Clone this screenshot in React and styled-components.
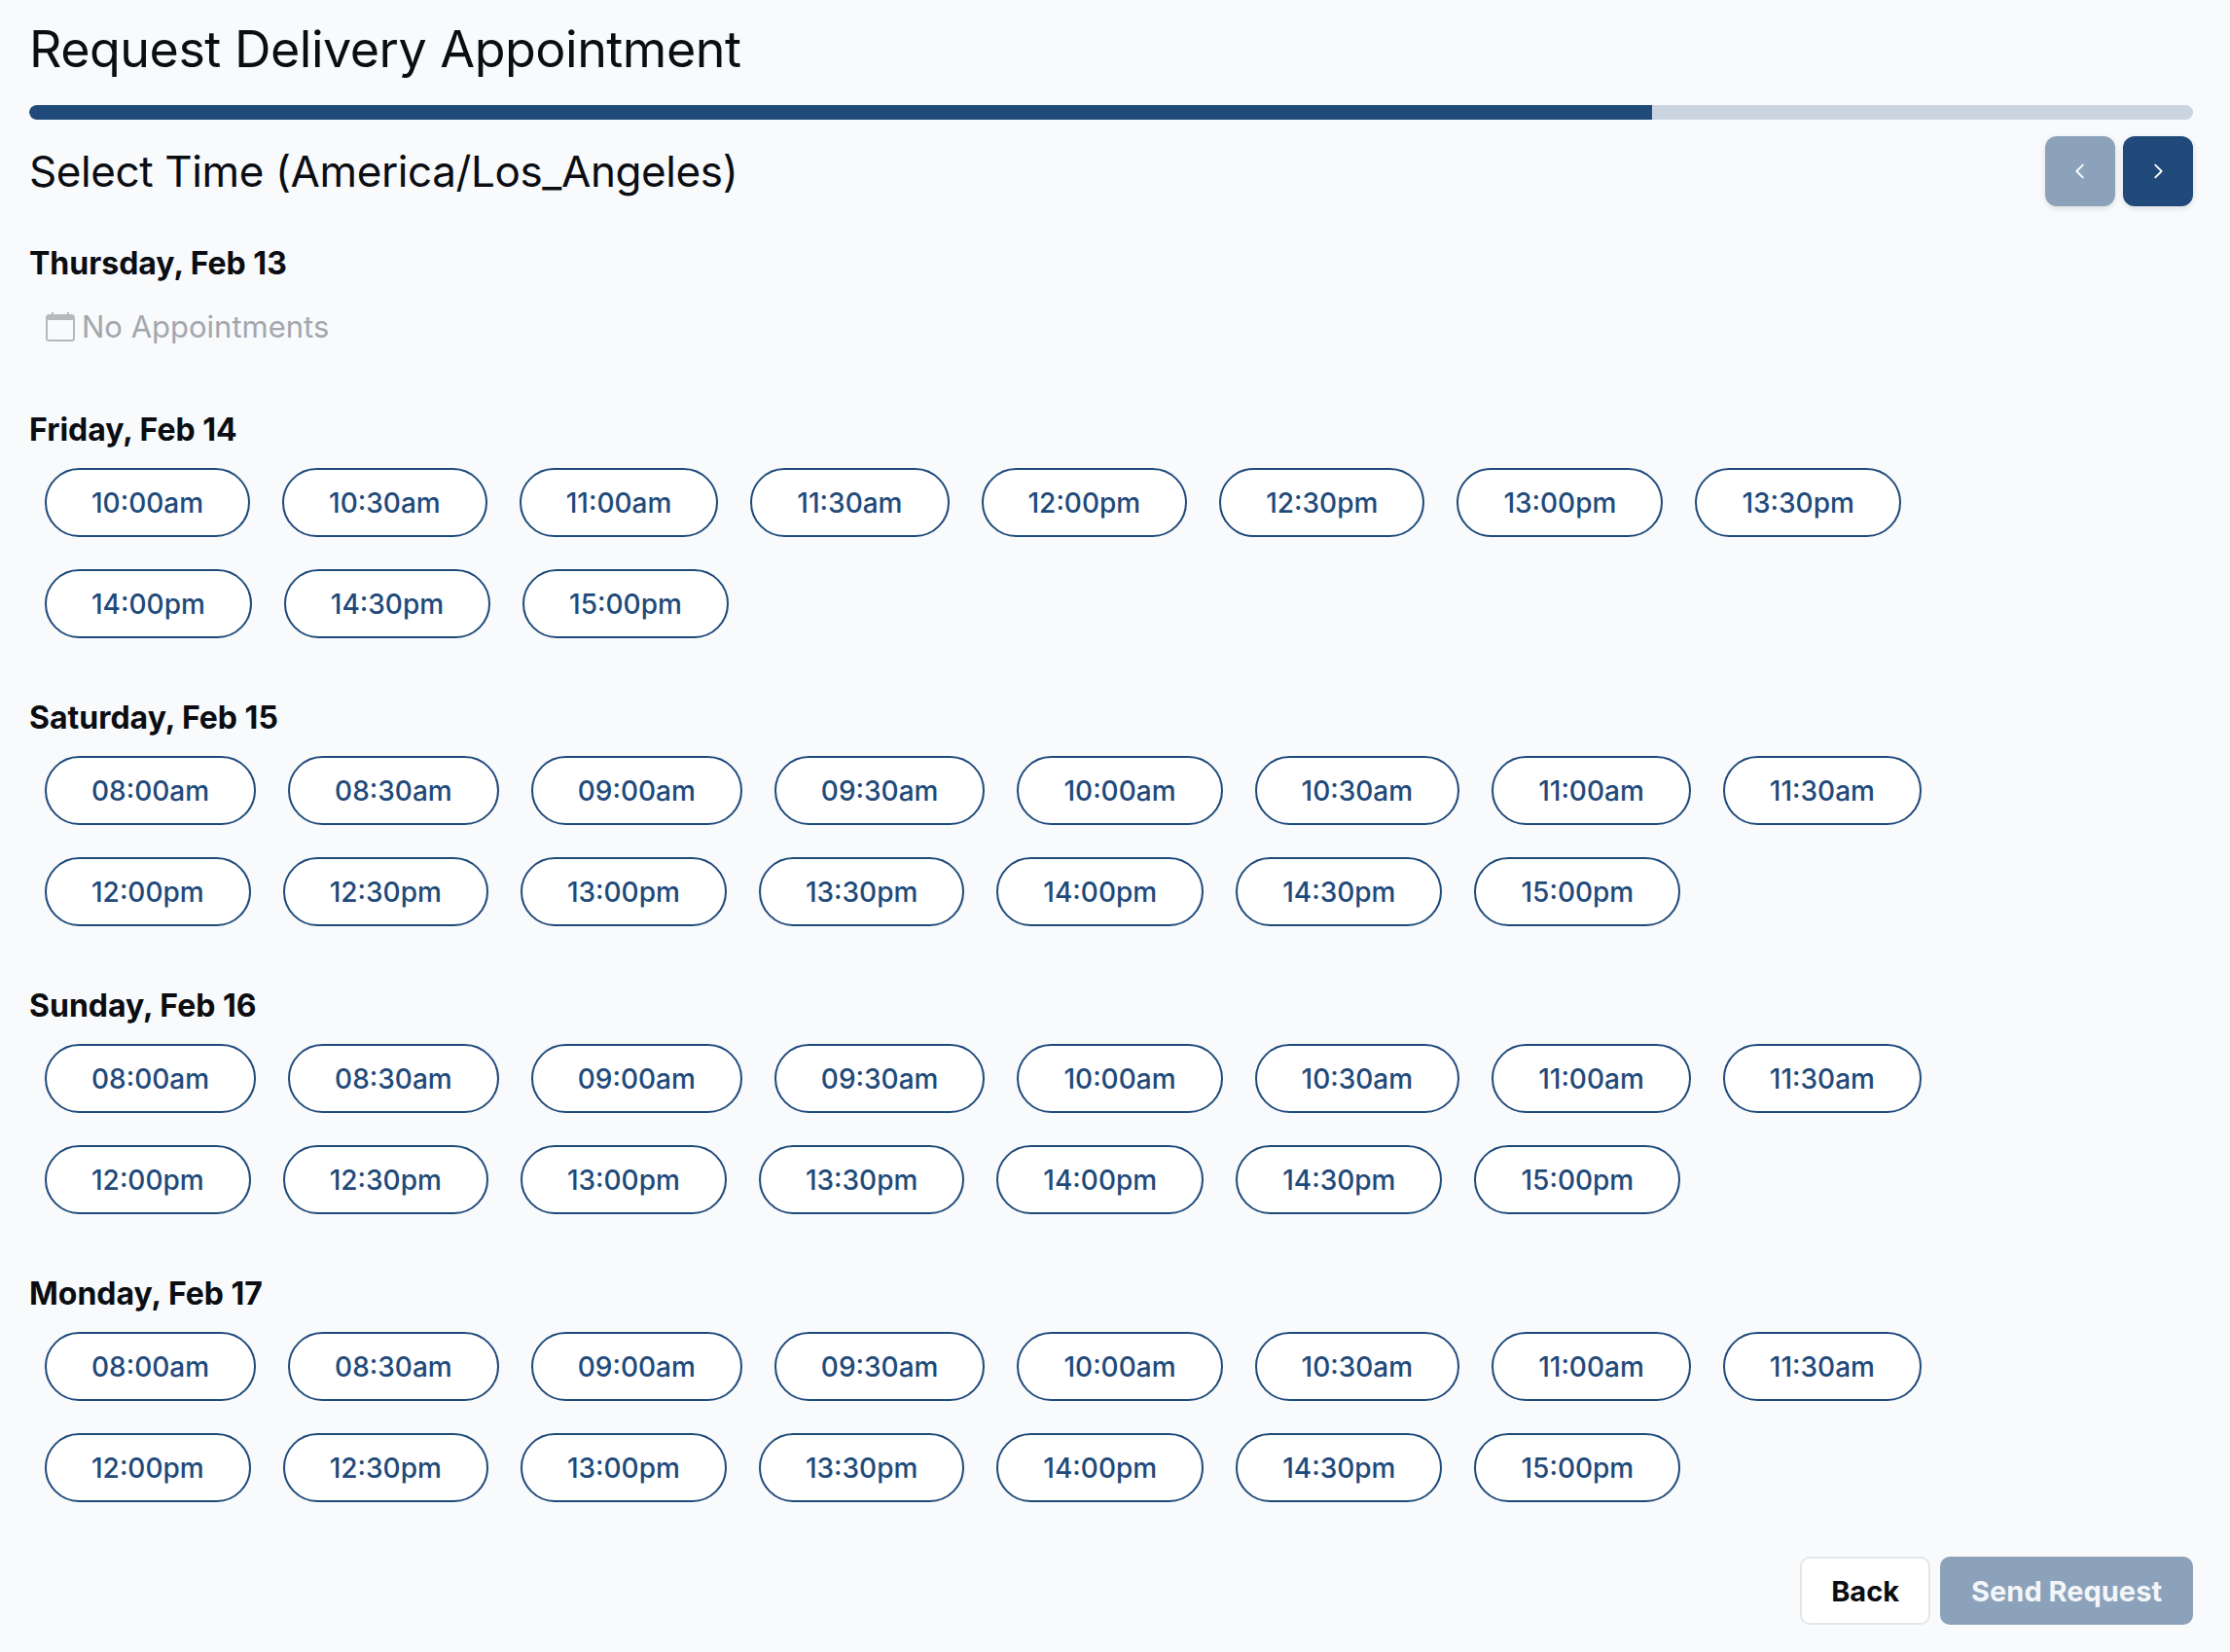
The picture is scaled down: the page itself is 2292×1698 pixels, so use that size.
import React from "react";
import styled, { createGlobalStyle } from "styled-components";

const Global = createGlobalStyle`
  html, body { margin: 0; background: #f8fafc; }
  body { font-family: Inter, "Noto Sans", sans-serif; color: #0b0d12; }
`;

const Page = styled.div`
  padding: 12px 38px 30px 30px;
  display: flex;
  flex-direction: column;
`;
const Title = styled.h1`
  margin: 0;
  font-size: 52px;
  font-weight: 400;
  line-height: 78px;
  letter-spacing: -0.5px;
`;
const Track = styled.div`
  margin-top: 18px;
  height: 15px;
  border-radius: 8px;
  background: #cbd5e1;
  overflow: hidden;
`;
const Fill = styled.div`
  height: 100%;
  background: #1f4a7a;
  border-radius: 8px 0 0 8px;
`;
const HeaderRow = styled.div`
  margin-top: 17px;
  display: flex;
  align-items: center;
  justify-content: space-between;
`;
const Subtitle = styled.h2`
  margin: 0;
  font-size: 44px;
  font-weight: 400;
  letter-spacing: -0.4px;
`;
const NavGroup = styled.div`
  display: flex;
  gap: 8px;
`;
const NavBtn = styled.button`
  width: 72px;
  height: 72px;
  border: none;
  border-radius: 12px;
  background: ${(p) => (p.$disabled ? "#8ca2bb" : "#1f4a7a")};
  color: #fff;
  display: flex;
  align-items: center;
  justify-content: center;
  box-shadow: 0 2px 6px rgba(0,0,0,0.12);
`;
const Days = styled.div`
  margin-top: 39px;
  display: flex;
  flex-direction: column;
  gap: 62px;
`;
const Day = styled.section`
  display: flex;
  flex-direction: column;
`;
const DayTitle = styled.h3`
  margin: 0;
  font-size: 32px;
  font-weight: 700;
  line-height: 40px;
`;
const Empty = styled.div`
  margin: 26px 0 6px 16px;
  display: flex;
  align-items: center;
  gap: 6px;
  color: #a3a7ad;
  font-size: 31px;
`;
const Slots = styled.div`
  margin-top: 19px;
  padding-left: 16px;
  display: flex;
  flex-wrap: wrap;
  column-gap: 33px;
  row-gap: 33px;
  max-width: 2000px;
`;
const Slot = styled.button`
  height: 71px;
  padding: 0 46px;
  border: 2px solid #1f4a7a;
  border-radius: 36px;
  background: #fff;
  color: #1f4a7a;
  font-family: Inter, sans-serif;
  font-size: 28px;
  font-weight: 500;
`;
const Footer = styled.div`
  margin-top: 56px;
  display: flex;
  justify-content: flex-end;
  gap: 10px;
`;
const FootBtn = styled.button`
  height: 70px;
  padding: 0 ${(p) => (p.$primary ? "32px" : "30px")};
  border-radius: 10px;
  font-family: Inter, sans-serif;
  font-size: 29px;
  font-weight: 700;
  border: ${(p) => (p.$primary ? "none" : "2px solid #e4e6ea")};
  background: ${(p) => (p.$primary ? "#8ca2bb" : "#fff")};
  color: ${(p) => (p.$primary ? "#f3f6f9" : "#0b0d12")};
`;

const half = (from, to) => {
  const out = [];
  for (let h = from; h <= to; h++) {
    for (const m of ["00", "30"]) {
      if (h === to && m === "30") continue;
      const hh = String(h).padStart(2, "0");
      out.push(`${hh}:${m}${h >= 12 ? "pm" : "am"}`);
    }
  }
  return out;
};

const days = [
  { name: "Thursday, Feb 13", slots: [] },
  { name: "Friday, Feb 14", slots: half(10, 15) },
  { name: "Saturday, Feb 15", slots: half(8, 15) },
  { name: "Sunday, Feb 16", slots: half(8, 15) },
  { name: "Monday, Feb 17", slots: half(8, 15) },
];

const Chevron = ({ dir }) => (
  <svg width="22" height="22" viewBox="0 0 24 24" fill="none" stroke="#fff" strokeWidth="2" strokeLinecap="round" strokeLinejoin="round">
    <path d={dir === "left" ? "M15 5l-7 7 7 7" : "M9 5l7 7-7 7"} />
  </svg>
);

const CalIcon = () => (
  <svg width="32" height="32" viewBox="0 0 32 32" fill="none">
    <rect x="2" y="4" width="28" height="26" rx="2.5" stroke="#b5b8bd" strokeWidth="2" />
    <rect x="2" y="4" width="28" height="5" rx="2" fill="#b5b8bd" />
    <rect x="7" y="1" width="2" height="5" fill="#b5b8bd" />
    <rect x="23" y="1" width="2" height="5" fill="#b5b8bd" />
  </svg>
);

export default function App() {
  return (
    <Page>
      <Global />
      <Title>Request Delivery Appointment</Title>
      <Track>
        <Fill style={{ width: "75%" }} />
      </Track>
      <HeaderRow>
        <Subtitle>Select Time (America/Los_Angeles)</Subtitle>
        <NavGroup>
          <NavBtn $disabled><Chevron dir="left" /></NavBtn>
          <NavBtn><Chevron dir="right" /></NavBtn>
        </NavGroup>
      </HeaderRow>
      <Days>
        {days.map((d) => (
          <Day key={d.name}>
            <DayTitle>{d.name}</DayTitle>
            {d.slots.length === 0 ? (
              <Empty><CalIcon />No Appointments</Empty>
            ) : (
              <Slots>
                {d.slots.map((s) => <Slot key={s}>{s}</Slot>)}
              </Slots>
            )}
          </Day>
        ))}
      </Days>
      <Footer>
        <FootBtn>Back</FootBtn>
        <FootBtn $primary>Send Request</FootBtn>
      </Footer>
    </Page>
  );
}
